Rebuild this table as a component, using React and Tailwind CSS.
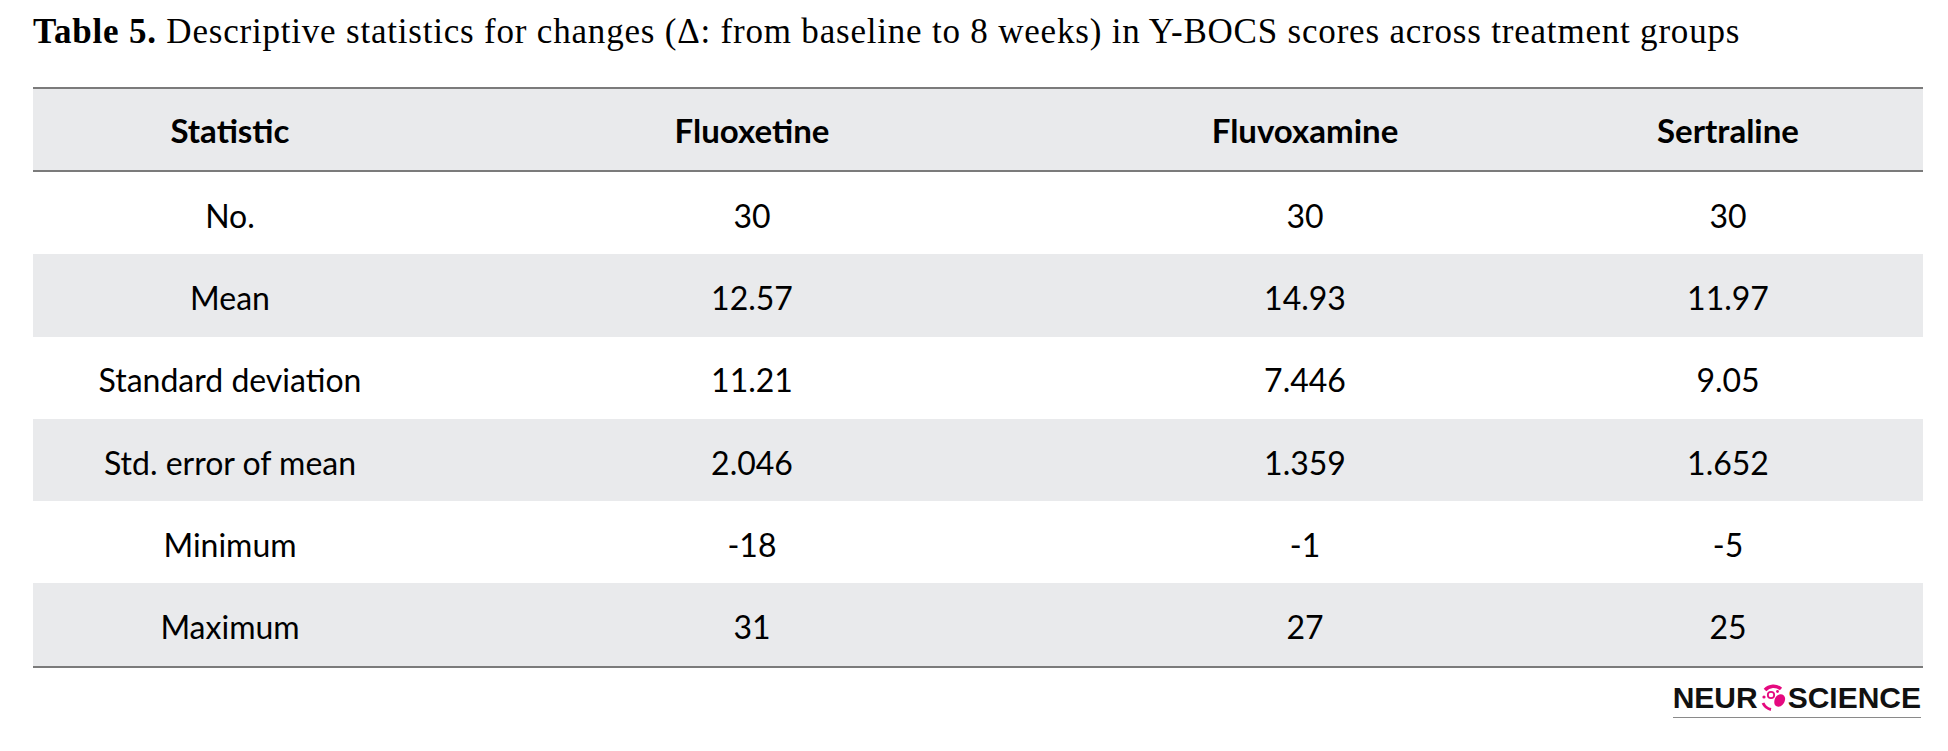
import React from "react";

const rows = [
  ["No.", "30", "30", "30"],
  ["Mean", "12.57", "14.93", "11.97"],
  ["Standard deviation", "11.21", "7.446", "9.05"],
  ["Std. error of mean", "2.046", "1.359", "1.652"],
  ["Minimum", "-18", "-1", "-5"],
  ["Maximum", "31", "27", "25"],
];

function LogoIcon() {
  return (
    <svg width="28" height="28" viewBox="0 0 28 28" className="mx-[1px]">
      <path d="M6 6 A11.5 11.5 0 0 1 22 5" stroke="#e5097f" strokeWidth="3.5" fill="none" />
      <circle cx="12" cy="11" r="3.2" stroke="#e5097f" strokeWidth="1.8" fill="white" />
      <circle cx="5" cy="13" r="1.6" fill="#e5097f" />
      <circle cx="18.5" cy="7.5" r="1.4" fill="#e5097f" />
      <path d="M19 11 C23 9 27 12 26 16 C25 21 21 24 17 22 C14 20 15 13 19 11 Z" fill="#e5097f" />
      <path d="M4 19 A11.5 11.5 0 0 0 12 25.5" stroke="#e5097f" strokeWidth="3" fill="none" />
    </svg>
  );
}

export default function App() {
  return (
    <div className="w-[1948px] h-[751px] bg-white text-black">
      <div className="h-[87px] pl-[33px] pt-[13px]">
        <p
          className="text-[35px] leading-[38px] tracking-[0.8px] whitespace-nowrap"
          style={{ fontFamily: '"Liberation Serif", serif' }}
        >
          <span className="font-bold">Table 5.</span> Descriptive statistics for changes (Δ: from baseline to 8 weeks) in Y-BOCS scores across treatment groups
        </p>
      </div>
      <div
        className="ml-[33px] w-[1890px] border-t-2 border-b-2 border-[#7b7b7b] text-[32px]"
        style={{ fontFamily: 'Lato, "Noto Sans", sans-serif' }}
      >
        <div className="grid grid-cols-[394px_650px_456px_390px] h-[83px] bg-[#e9eaec] border-b-2 border-[#7b7b7b] font-bold text-[33px]">
          {["Statistic", "Fluoxetine", "Fluvoxamine", "Sertraline"].map((h) => (
            <div key={h} className="flex items-center justify-center pt-[3px]">{h}</div>
          ))}
        </div>
        {rows.map((r, i) => (
          <div
            key={r[0]}
            className={`grid grid-cols-[394px_650px_456px_390px] h-[82.3px] ${i % 2 === 1 ? "bg-[#e9eaec]" : "bg-white"}`}
          >
            {r.map((c, j) => (
              <div key={j} className="flex items-center justify-center pt-[5px]">{c}</div>
            ))}
          </div>
        ))}
      </div>
      <div className="flex justify-end pr-[27px] mt-[15px]">
        <div
          className="flex items-center border-b border-[#8a8a8a] pb-[4px] text-[30px] leading-[30px] font-bold text-[#111]"
          style={{ fontFamily: '"Liberation Sans", Arial, sans-serif' }}
        >
          <span>NEUR</span>
          <LogoIcon />
          <span>SCIENCE</span>
        </div>
      </div>
    </div>
  );
}
